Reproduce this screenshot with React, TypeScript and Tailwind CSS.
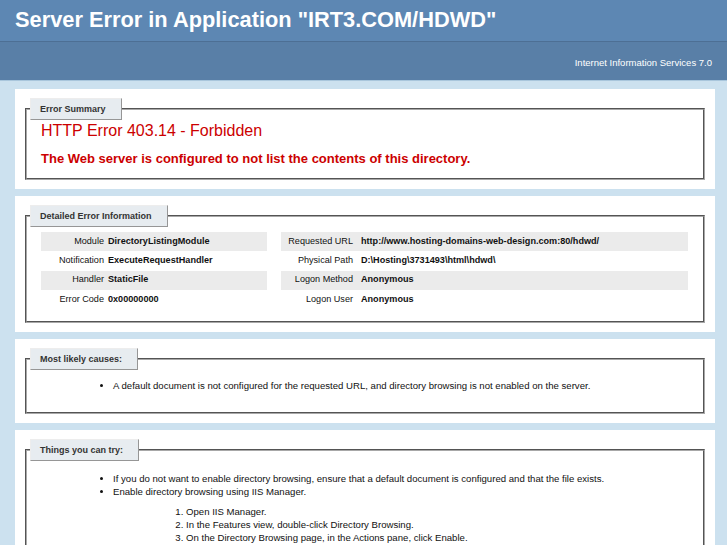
import React from "react";

const sans = "font-['Liberation_Sans',Arial,sans-serif]";

const Legend = ({ children }: { children: React.ReactNode }) => (
  <legend className="-ml-[11px] h-[22px] border border-t-[#ededed] border-l-[#ededed] border-r-[#969696] border-b-[#969696] bg-[#e7ecf0] pl-[9px] pr-[15px] text-[9px] font-bold leading-[20px] text-[#333]">
    {children}
  </legend>
);

const Card = ({ title, children, pb = "pb-[10px]" }: { title: string; children: React.ReactNode; pb?: string }) => (
  <div className="w-[700px] bg-white px-[10px] pt-[9px] pb-[9px]">
    <fieldset className={`border-2 border-[#a8a8a8] [border-style:groove] px-[14px] ${pb}`}>
      <Legend>{title}</Legend>
      {children}
    </fieldset>
  </div>
);

const leftRows = [
  ["Module", "DirectoryListingModule"],
  ["Notification", "ExecuteRequestHandler"],
  ["Handler", "StaticFile"],
  ["Error Code", "0x00000000"],
];

const rightRows = [
  ["Requested URL", "http://www.hosting-domains-web-design.com:80/hdwd/"],
  ["Physical Path", "D:\\Hosting\\3731493\\html\\hdwd\\"],
  ["Logon Method", "Anonymous"],
  ["Logon User", "Anonymous"],
];

const DetailTable = ({ rows, labelW, gap }: { rows: string[][]; labelW: string; gap: string }) => (
  <div className="flex flex-col">
    {rows.map(([k, v], i) => (
      <div key={k} className={`flex h-[19.3px] items-center text-[9.1px] text-[#111] ${i % 2 === 0 ? "bg-[#ebebeb]" : ""}`}>
        <span className={`${labelW} shrink-0 text-right`}>{k}</span>
        <span className={`${gap} font-bold`}>{v}</span>
      </div>
    ))}
  </div>
);

export default function App() {
  return (
    <div className={`min-h-screen bg-[#cce1ef] ${sans}`}>
      <div className="h-[41px] bg-[#5d87b3] pl-[15px]">
        <h1 className="pt-[6px] text-[21.8px] font-bold leading-[28px] text-white">
          Server Error in Application "IRT3.COM/HDWD"
        </h1>
      </div>
      <div className="flex h-[40px] items-center justify-end border-t border-t-[#4d6f94] border-b border-b-[#a9c6dc] bg-[#597fa7] pt-[4px] pr-[15px]">
        <span className="text-[9.5px] text-white">Internet Information Services 7.0</span>
      </div>

      <div className="flex flex-col gap-[7px] pt-[8px] pl-[15px]">
        <Card title="Error Summary" pb="pb-[12px]">
          <h2 className="mt-[1px] text-[16px] leading-[19px] text-[#cc0000]">HTTP Error 403.14 - Forbidden</h2>
          <h3 className="mt-[11px] text-[13px] font-bold leading-[15px] text-[#cc0000]">
            The Web server is configured to not list the contents of this directory.
          </h3>
        </Card>

        <Card title="Detailed Error Information" pb="pb-[12px]">
          <div className="mt-[5px] grid grid-cols-[226px_407px] gap-[14px]">
            <DetailTable rows={leftRows} labelW="w-[63px]" gap="pl-[4px]" />
            <DetailTable rows={rightRows} labelW="w-[72px]" gap="pl-[8px]" />
          </div>
        </Card>

        <Card title="Most likely causes:" pb="pb-[8px]">
          <ul className="mt-[9px] mb-[12px] list-disc pl-[72px] text-[9.6px] leading-[13px] text-[#111]">
            <li>A default document is not configured for the requested URL, and directory browsing is not enabled on the server.</li>
          </ul>
        </Card>

        <Card title="Things you can try:">
          <ul className="mt-[11px] list-disc pl-[72px] text-[9.6px] leading-[13px] text-[#111]">
            <li>If you do not want to enable directory browsing, ensure that a default document is configured and that the file exists.</li>
            <li>
              Enable directory browsing using IIS Manager.
              <ol className="mt-[7px] list-decimal pl-[73px]">
                <li>Open IIS Manager.</li>
                <li>In the Features view, double-click Directory Browsing.</li>
                <li>On the Directory Browsing page, in the Actions pane, click Enable.</li>
              </ol>
            </li>
          </ul>
        </Card>
      </div>
    </div>
  );
}
